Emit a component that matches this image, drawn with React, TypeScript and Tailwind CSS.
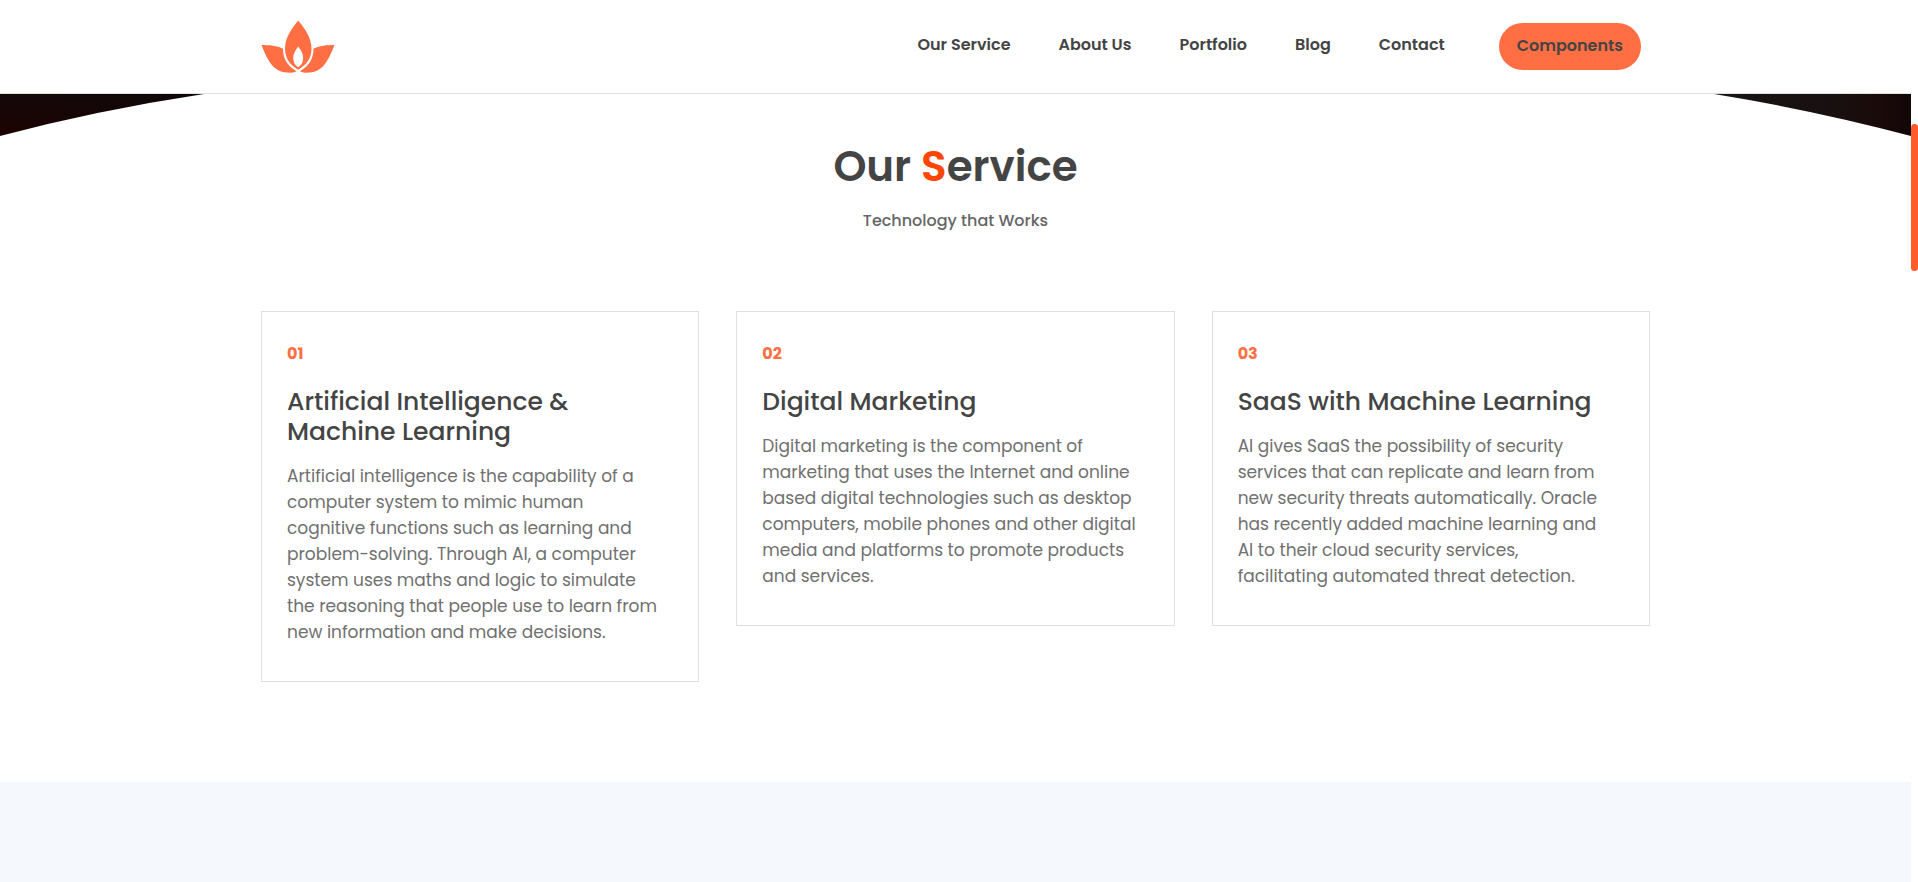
const navLinks = [
  { label: "Our Service", href: "#service" },
  { label: "About Us", href: "#about" },
  { label: "Portfolio", href: "#portfolio" },
  { label: "Blog", href: "#blog" },
  { label: "Contact", href: "#contact" },
];

const services = [
  {
    number: "01",
    title: "Artificial Intelligence & Machine Learning",
    text: "Artificial intelligence is the capability of a computer system to mimic human cognitive functions such as learning and problem-solving. Through AI, a computer system uses maths and logic to simulate the reasoning that people use to learn from new information and make decisions.",
  },
  {
    number: "02",
    title: "Digital Marketing",
    text: "Digital marketing is the component of marketing that uses the Internet and online based digital technologies such as desktop computers, mobile phones and other digital media and platforms to promote products and services.",
  },
  {
    number: "03",
    title: "SaaS with Machine Learning",
    text: "AI gives SaaS the possibility of security services that can replicate and learn from new security threats automatically. Oracle has recently added machine learning and AI to their cloud security services, facilitating automated threat detection.",
  },
];

function LotusLogo() {
  return (
    <svg width="74" height="54" viewBox="0 0 74 54" fill="#ff6f43" aria-hidden="true">
      <path d="M37.2 0.5C41.5 6 50.5 16.5 50.5 28.5C50.5 38 45.5 45 37.2 49.7C28.9 45 24 38 24 28.5C24 16.5 33 6 37.2 0.5Z" />
      <path fill="#fff" d="M37.2 26.5C39.5 29.7 42.2 33.5 42.2 38C42.2 42 40.5 45.3 37.2 47.3C34 45.3 32.2 42 32.2 38C32.2 33.5 35 29.7 37.2 26.5Z" />
      <path d="M0.5 25C8 25 16 25.6 22 28.8C21.9 38 26 45.8 35.6 51.2C32.5 52.6 29.5 52.8 26 52.6C12 51.8 6.5 40 0.5 25Z" />
      <path d="M73.5 25C66 25 58.5 25.6 52.5 28.8C52.6 38 48.5 45.8 38.9 51.2C42 52.6 45 52.8 48.5 52.6C62 51.8 67.5 40 73.5 25Z" />
    </svg>
  );
}

function Header() {
  return (
    <header className="border-b border-[#dee0e0] bg-white">
      <div className="mx-auto flex h-[93px] max-w-[1389px] items-center justify-between pr-[9px]">
        <a href="#home" aria-label="Home">
          <LotusLogo />
        </a>
        <nav className="flex items-center gap-12 text-base font-semibold text-[#444]">
          {navLinks.map((link) => (
            <a key={link.href} href={link.href} className="pb-1">
              {link.label}
            </a>
          ))}
          <button type="button" className="ml-1.5 h-[47px] rounded-full bg-[#ff6f43] px-[18px] pb-0.5 font-semibold">
            Components
          </button>
        </nav>
      </div>
    </header>
  );
}

function HeroCurve() {
  return (
    <svg className="block h-[42px] w-full" viewBox="0 0 1911 42" preserveAspectRatio="none" aria-hidden="true">
      <defs>
        <linearGradient id="leftShade" x1="0" y1="1" x2="0.4" y2="0">
          <stop offset="0" stopColor="#1d0302" />
          <stop offset="1" stopColor="#120708" />
        </linearGradient>
        <linearGradient id="rightShade" x1="0" y1="0" x2="1" y2="0">
          <stop offset="0" stopColor="#191314" />
          <stop offset="0.6" stopColor="#181010" />
          <stop offset="0.85" stopColor="#1a0a09" />
          <stop offset="1" stopColor="#120606" />
        </linearGradient>
      </defs>
      <path fill="url(#leftShade)" d="M0 0H204Q98 16 0 42Z" />
      <path fill="url(#rightShade)" d="M1911 0H1714Q1813 16 1911 42Z" />
    </svg>
  );
}

export default function App() {
  return (
    <div className="flex min-h-screen bg-white font-['Poppins','Inter',sans-serif] text-[#444]">
      <div className="flex min-w-0 flex-1 flex-col">
        <Header />
        <main className="flex flex-1 flex-col">
          <HeroCurve />
          <section id="service" className="mx-auto w-full max-w-[1389px] pb-[100px]">
            <div className="pt-1 text-center">
              <h2 className="text-[42px] leading-[54px] font-semibold">
                Our <span className="text-[#ff4500]">S</span>ervice
              </h2>
              <p className="mt-[13px] text-base leading-7 font-medium text-[#666]">Technology that Works</p>
            </div>
            <div className="mt-[76px] grid grid-cols-3 items-start gap-[37px]">
              {services.map((service) => (
                <article key={service.number} className="border border-[#dee0e0] px-[25px] pt-7 pb-9">
                  <p className="text-base leading-7 font-bold text-[#ff6f43]">{service.number}</p>
                  <h3 className="mt-[19px] text-[25px] leading-[30px] font-medium">{service.title}</h3>
                  <p className="mt-4 pr-3 text-[17px] leading-[26px] text-[#707070]">{service.text}</p>
                </article>
              ))}
            </div>
          </section>
          <section className="min-h-[100px] flex-1 bg-[#f5f9fe]" />
        </main>
      </div>
      <div className="w-[7px] shrink-0 pt-[124px]">
        <div className="h-[147px] rounded-full bg-[#ff5c2b]" />
      </div>
    </div>
  );
}
